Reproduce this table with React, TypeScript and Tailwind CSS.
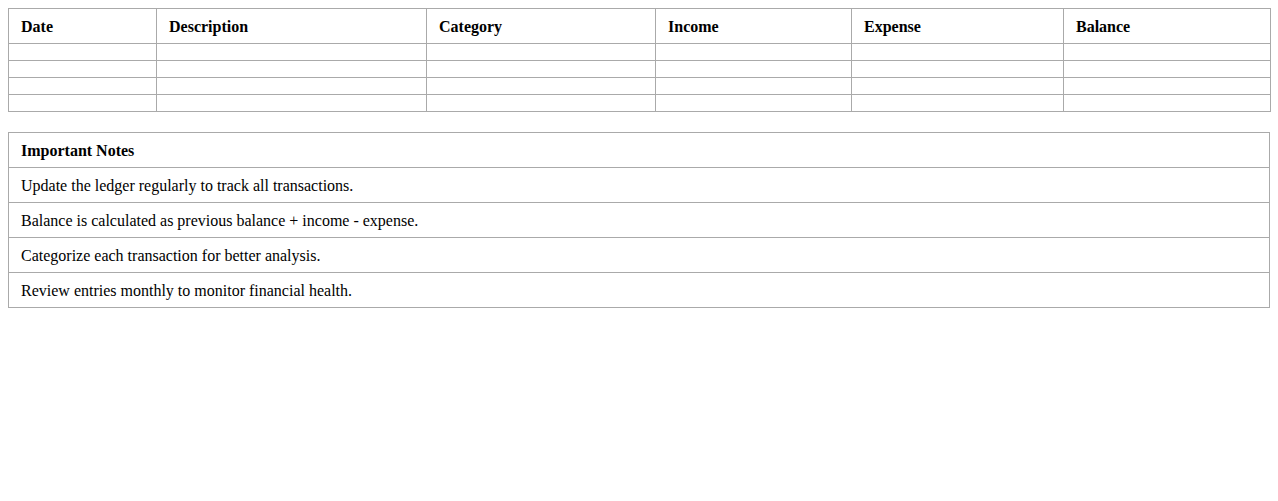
import React from "react";

const cols = [
  { name: "Date", w: "w-[148px]" },
  { name: "Description", w: "w-[270px]" },
  { name: "Category", w: "w-[229px]" },
  { name: "Income", w: "w-[196px]" },
  { name: "Expense", w: "w-[212px]" },
  { name: "Balance", w: "w-[207px]" },
];

const notes = [
  "Update the ledger regularly to track all transactions.",
  "Balance is calculated as previous balance + income - expense.",
  "Categorize each transaction for better analysis.",
  "Review entries monthly to monitor financial health.",
];

export default function App() {
  return (
    <div
      className="bg-white text-black p-2 min-h-[501px] text-[16px]"
      style={{ fontFamily: '"Liberation Serif", "Times New Roman", serif' }}
    >
      <table className="w-full table-fixed border-collapse border border-[#aaa]">
        <colgroup>
          {cols.map((c) => (
            <col key={c.name} className={c.w} />
          ))}
        </colgroup>
        <thead>
          <tr>
            {cols.map((c) => (
              <th
                key={c.name}
                className="border border-[#aaa] px-3 pt-[9px] pb-[7px] text-left font-bold leading-[18px]"
              >
                {c.name}
              </th>
            ))}
          </tr>
        </thead>
        <tbody>
          {[0, 1, 2, 3].map((r) => (
            <tr key={r}>
              {cols.map((c) => (
                <td key={c.name} className="border border-[#aaa] px-3 py-2 h-[17px]"></td>
              ))}
            </tr>
          ))}
        </tbody>
      </table>

      <table className="w-full border-collapse border border-[#aaa] mt-5">
        <thead>
          <tr>
            <th className="border border-[#aaa] px-3 pt-[9px] pb-[7px] text-left font-bold leading-[18px]">
              Important Notes
            </th>
          </tr>
        </thead>
        <tbody>
          {notes.map((n) => (
            <tr key={n}>
              <td className="border border-[#aaa] px-3 pt-[9px] pb-[7px] leading-[18px]">{n}</td>
            </tr>
          ))}
        </tbody>
      </table>
    </div>
  );
}
